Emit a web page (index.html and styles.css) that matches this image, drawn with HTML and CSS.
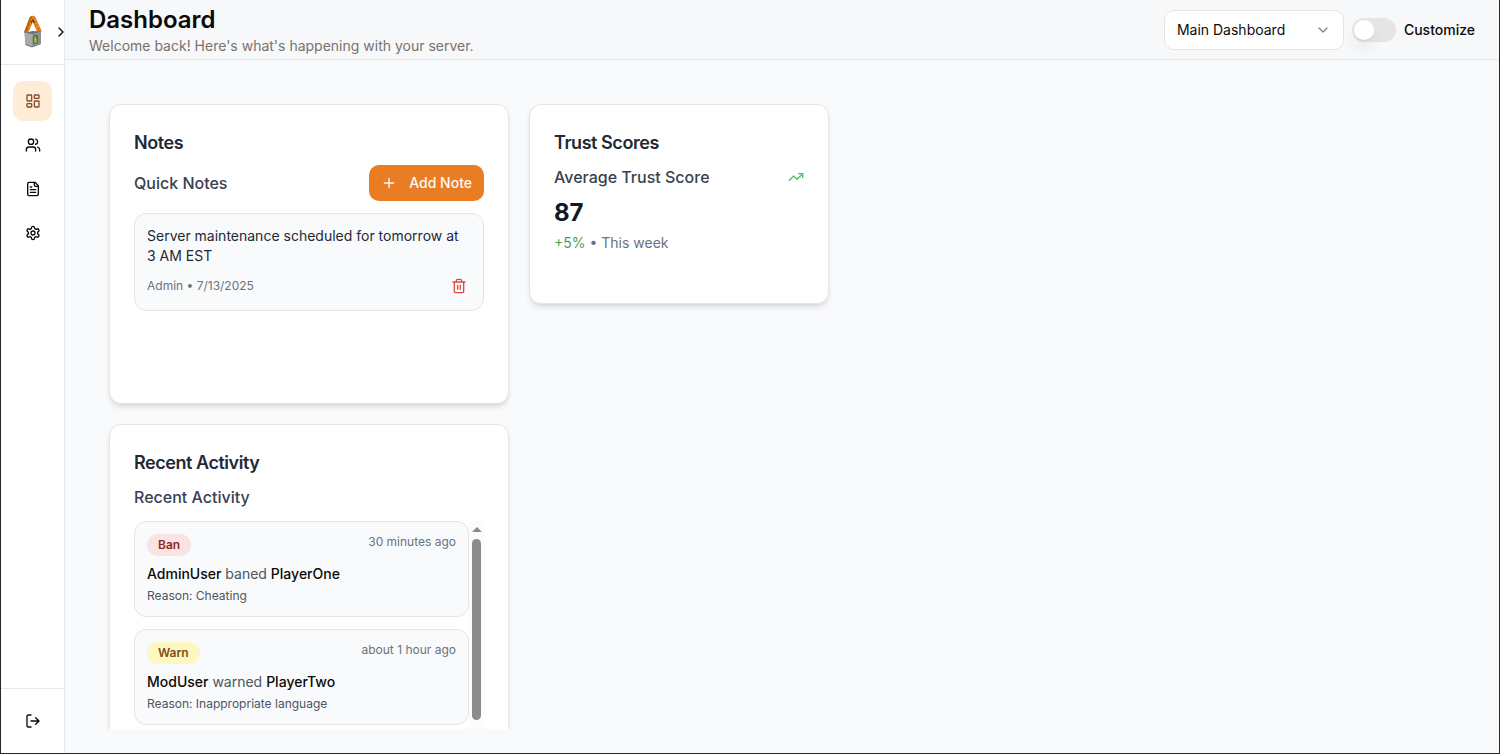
FILE: index.html
```html
<!DOCTYPE html>
<html lang="en">
<head>
<meta charset="utf-8">
<title>Dashboard</title>
<link rel="stylesheet" href="styles.css">
</head>
<body>
<div class="app">
  <aside class="sidebar">
    <div class="brand">
      <svg class="logo" width="20" height="34" viewBox="0 0 20 34">
        <path d="M1 17.500 6.600 2.200Q9.500-.6 12.400 2.200L18.800 16.600 14.500 17.500 9.800 7.200 5 17.800Z" fill="#d87b16"/>
        <path d="M1 17.500 6.800 2.300 9.600 1 7.400 7 3 18Z" fill="#b9610f"/>
        <path d="M7.200 3.300 11.500 7.800M9.200 1.900 13.800 6.900M5.800 7 8 9.500M11.700 9 14.800 8M4.500 10.500 6.800 12.500M13 12.200 16.300 11.500" stroke="#ee9a30" stroke-width=".8" fill="none"/>
        <path d="M8 8 9.900 5 11.600 8" stroke="#7a3b08" stroke-width="1.200" fill="none"/>
        <path d="M1.500 17.500 18 16.500V28.500L9 32 2.500 29.500Z" fill="#8f9090"/>
        <path d="M1.500 17.500 9.200 19V32L2.500 29.500Z" fill="#a8a9a9"/>
        <path d="M1.500 17.500 10 16 18 16.500 9.200 19Z" fill="#707273"/>
        <path d="M2.500 29.500 9 32 18 28.500" stroke="#777879" fill="none"/>
        <path d="M10.200 23Q10 20 12.300 19.800T15 22.200L15.200 28 10.300 29.600Z" fill="#59614a"/>
        <path d="M11 24.200 13.800 23.300 14.500 27.300 11.300 28.500Z" fill="#79bd35"/>
        <path d="M12.200 21.300V25.500" stroke="#d6c84a" stroke-width="1.200"/>
      </svg>
      <svg class="icon expand" viewBox="0 0 24 24"><path d="m9 18 6-6-6-6"/></svg>
    </div>
    <nav class="nav">
      <a class="nav-item active"><svg class="icon" viewBox="0 0 24 24"><rect x="3" y="3" width="7" height="9" rx="1"/><rect x="14" y="3" width="7" height="5" rx="1"/><rect x="14" y="12" width="7" height="9" rx="1"/><rect x="3" y="16" width="7" height="5" rx="1"/></svg></a>
      <a class="nav-item"><svg class="icon" viewBox="0 0 24 24"><path d="M16 21v-2a4 4 0 0 0-4-4H6a4 4 0 0 0-4 4v2"/><circle cx="9" cy="7" r="4"/><path d="M22 21v-2a4 4 0 0 0-3-3.87M16 3.13a4 4 0 0 1 0 7.75"/></svg></a>
      <a class="nav-item"><svg class="icon" viewBox="0 0 24 24"><path d="M15 2H6a2 2 0 0 0-2 2v16a2 2 0 0 0 2 2h12a2 2 0 0 0 2-2V7Z"/><path d="M14 2v4a2 2 0 0 0 2 2h4M10 9H8M16 13H8M16 17H8"/></svg></a>
      <a class="nav-item"><svg class="icon" viewBox="0 0 24 24"><path d="M12.22 2h-.44a2 2 0 0 0-2 2v.18a2 2 0 0 1-1 1.73l-.43.25a2 2 0 0 1-2 0l-.15-.08a2 2 0 0 0-2.73.73l-.22.38a2 2 0 0 0 .73 2.73l.15.1a2 2 0 0 1 1 1.72v.51a2 2 0 0 1-1 1.74l-.15.09a2 2 0 0 0-.73 2.73l.22.38a2 2 0 0 0 2.73.73l.15-.08a2 2 0 0 1 2 0l.43.25a2 2 0 0 1 1 1.73V20a2 2 0 0 0 2 2h.44a2 2 0 0 0 2-2v-.18a2 2 0 0 1 1-1.73l.43-.25a2 2 0 0 1 2 0l.15.08a2 2 0 0 0 2.73-.73l.22-.39a2 2 0 0 0-.73-2.73l-.15-.08a2 2 0 0 1-1-1.74v-.5a2 2 0 0 1 1-1.74l.15-.09a2 2 0 0 0 .73-2.73l-.22-.38a2 2 0 0 0-2.73-.73l-.15.08a2 2 0 0 1-2 0l-.43-.25a2 2 0 0 1-1-1.73V4a2 2 0 0 0-2-2z"/><circle cx="12" cy="12" r="3"/></svg></a>
    </nav>
    <div class="sidebar-footer">
      <a class="nav-item"><svg class="icon" viewBox="0 0 24 24"><path d="M9 21H5a2 2 0 0 1-2-2V5a2 2 0 0 1 2-2h4"/><path d="m16 17 5-5-5-5M21 12H9"/></svg></a>
    </div>
  </aside>
  <main class="main">
    <header class="header">
      <div>
        <h1 class="page-title">Dashboard</h1>
        <p class="subtitle">Welcome back! Here's what's happening with your server.</p>
      </div>
      <div class="controls">
        <div class="select"><span>Main Dashboard</span><svg class="icon select-icon" viewBox="0 0 24 24"><path d="m6 9 6 6 6-6"/></svg></div>
        <div class="switch"><span class="knob"></span></div>
        <span class="switch-label">Customize</span>
      </div>
    </header>
    <div class="canvas">
      <div class="grid">
        <section class="card notes">
          <h2 class="card-title">Notes</h2>
          <div class="row">
            <h3 class="card-subtitle">Quick Notes</h3>
            <button class="add"><svg class="icon" viewBox="0 0 24 24"><path d="M5 12h14M12 5v14"/></svg><span>Add Note</span></button>
          </div>
          <div class="note">
            <p class="note-text">Server maintenance scheduled for tomorrow at 3 AM EST</p>
            <div class="note-footer">
              <span>Admin • 7/13/2025</span>
              <span class="delete"><svg class="icon" viewBox="0 0 24 24"><path d="M3 6h18M19 6v14a2 2 0 0 1-2 2H7a2 2 0 0 1-2-2V6M8 6V4a2 2 0 0 1 2-2h4a2 2 0 0 1 2 2v2M10 11v6M14 11v6"/></svg></span>
            </div>
          </div>
        </section>
        <section class="card trust">
          <h2 class="card-title">Trust Scores</h2>
          <div class="row">
            <h3 class="card-subtitle">Average Trust Score</h3>
            <svg class="icon trend" viewBox="0 0 24 24"><path d="m22 7-8.500 8.500-5-5L2 17"/><path d="M16 7h6v6"/></svg>
          </div>
          <div class="score">87</div>
          <p class="delta"><span class="up">+5%</span> • This week</p>
        </section>
        <section class="card activity">
          <h2 class="card-title">Recent Activity</h2>
          <h3 class="card-subtitle">Recent Activity</h3>
          <div class="scroller">
            <div class="feed">
              <article class="event">
                <div class="event-top"><span class="badge ban">Ban</span><time>30 minutes ago</time></div>
                <p class="event-text"><b>AdminUser</b> baned <b>PlayerOne</b></p>
                <p class="reason">Reason: Cheating</p>
              </article>
              <article class="event">
                <div class="event-top"><span class="badge warn">Warn</span><time>about 1 hour ago</time></div>
                <p class="event-text"><b>ModUser</b> warned <b>PlayerTwo</b></p>
                <p class="reason">Reason: Inappropriate language</p>
              </article>
            </div>
            <div class="track"><span class="arrow"></span><span class="thumb"></span></div>
          </div>
        </section>
      </div>
    </div>
  </main>
</div>
</body>
</html>
```
FILE: styles.css
```css
* { box-sizing: border-box; margin: 0; }
body { font-family: Inter, "Liberation Sans", sans-serif; font-size: 14px; line-height: 20px; color: #0c0a09; }
.app { display: flex; height: 754px; border: solid #27272e; border-width: 0 1px 1px; background: #f9fafc; overflow: hidden; }
.icon { width: 16px; height: 16px; flex: none; fill: none; stroke: currentColor; stroke-width: 2; stroke-linecap: round; stroke-linejoin: round; }
.sidebar { display: flex; flex-direction: column; width: 64px; flex: none; background: #fff; border-right: 1px solid #e5e7eb; }
.brand { display: flex; align-items: center; height: 65px; padding-left: 22px; border-bottom: 1px solid #e5e7eb; overflow: hidden; }
.logo { flex: none; }
.expand { margin-left: 10px; }
.nav { display: flex; flex: 1; flex-direction: column; gap: 4px; padding: 16px 12px; }
.nav-item { display: flex; align-items: center; justify-content: center; height: 40px; border-radius: 10px; }
.nav-item.active { background: #fdedd6; color: #8a4b2c; }
.sidebar-footer { padding: 12px; border-top: 1px solid #e5e7eb; }
.main { display: flex; flex: 1; flex-direction: column; min-width: 0; }
.header { display: flex; align-items: center; justify-content: space-between; height: 60px; flex: none; padding: 0 24px; background: #f7f8fa; border-bottom: 1px solid #e5e7eb; }
.page-title { font-size: 24px; line-height: 32px; font-weight: 600; }
.subtitle { color: #79716b; }
.controls { display: flex; align-items: center; gap: 8px; }
.select { display: flex; align-items: center; justify-content: space-between; width: 180px; height: 40px; padding: 0 12px; border: 1px solid #e7e5e4; border-radius: 10px; background: #fff; }
.select-icon { opacity: .5; }
.switch { width: 44px; height: 24px; padding: 2px; border-radius: 12px; background: #e7e5e4; }
.knob { display: block; width: 20px; height: 20px; border-radius: 50%; background: #fff; box-shadow: 0 10px 15px -3px rgba(0,0,0,.1), 0 4px 6px -4px rgba(0,0,0,.1); }
.switch-label { font-weight: 500; }
.canvas { flex: 1; min-height: 0; padding: 24px; }
.grid { display: grid; grid-template-columns: 400px 300px; grid-template-rows: 300px 400px; gap: 20px; height: 100%; padding: 20px; overflow: hidden; }
.card { padding: 24px; border: 1px solid #e5e5e5; border-radius: 12px; background: #fff; box-shadow: 0 4px 6px -1px rgba(0,0,0,.1), 0 2px 4px -2px rgba(0,0,0,.1); }
.trust { height: 200px; }
.card-title { margin-bottom: 8px; font-size: 18px; line-height: 28px; font-weight: 600; letter-spacing: -.025em; color: #1f2937; }
.card-subtitle { font-size: 16px; line-height: 24px; font-weight: 500; color: #374151; }
.row { display: flex; align-items: center; justify-content: space-between; }
.add { display: flex; align-items: center; gap: 12px; height: 36px; padding: 0 12px; border: 0; border-radius: 10px; background: #ea7c24; color: #fafaf9; font: 500 14px/20px Inter, sans-serif; }
.note, .event { padding: 12px; border: 1px solid #e5e5e5; border-radius: 12px; background: #f9fafb; }
.note { margin-top: 12px; }
.note-text { color: #1f2937; }
.note-footer { display: flex; align-items: center; justify-content: space-between; margin-top: 8px; font-size: 12px; color: #6b7280; }
.delete { display: flex; padding: 4px; color: #dc4a40; }
.trend { color: #4fbf67; }
.score { margin-top: 8px; font-size: 24px; line-height: 32px; font-weight: 700; color: #111827; }
.delta { margin-top: 4px; color: #6b7280; }
.up { color: #4d9e56; }
.scroller { display: flex; height: 279px; margin-top: 12px; }
.feed { display: flex; flex: 1; flex-direction: column; gap: 12px; }
.event-top { display: flex; align-items: flex-start; justify-content: space-between; font-size: 12px; line-height: 16px; color: #6b7280; }
.badge { padding: 3px 11px; border-radius: 11px; font-weight: 600; }
.ban { background: #fae3e3; color: #8f2823; }
.warn { background: #fdf8c1; color: #804d18; }
.event-text { margin-top: 8px; color: #4b5563; }
.event-text b { font-weight: 500; color: #0c0a09; }
.reason { margin-top: 4px; font-size: 12px; line-height: 16px; color: #4b5563; }
.track { display: flex; flex-direction: column; align-items: center; width: 15px; padding-top: 6px; background: #fcfcfc; }
.arrow { border: solid transparent; border-width: 0 5px 5px; border-bottom-color: #8b8b8b; }
.thumb { width: 9px; height: 181px; margin-top: 7px; border-radius: 5px; background: #8b8b8b; }
```
